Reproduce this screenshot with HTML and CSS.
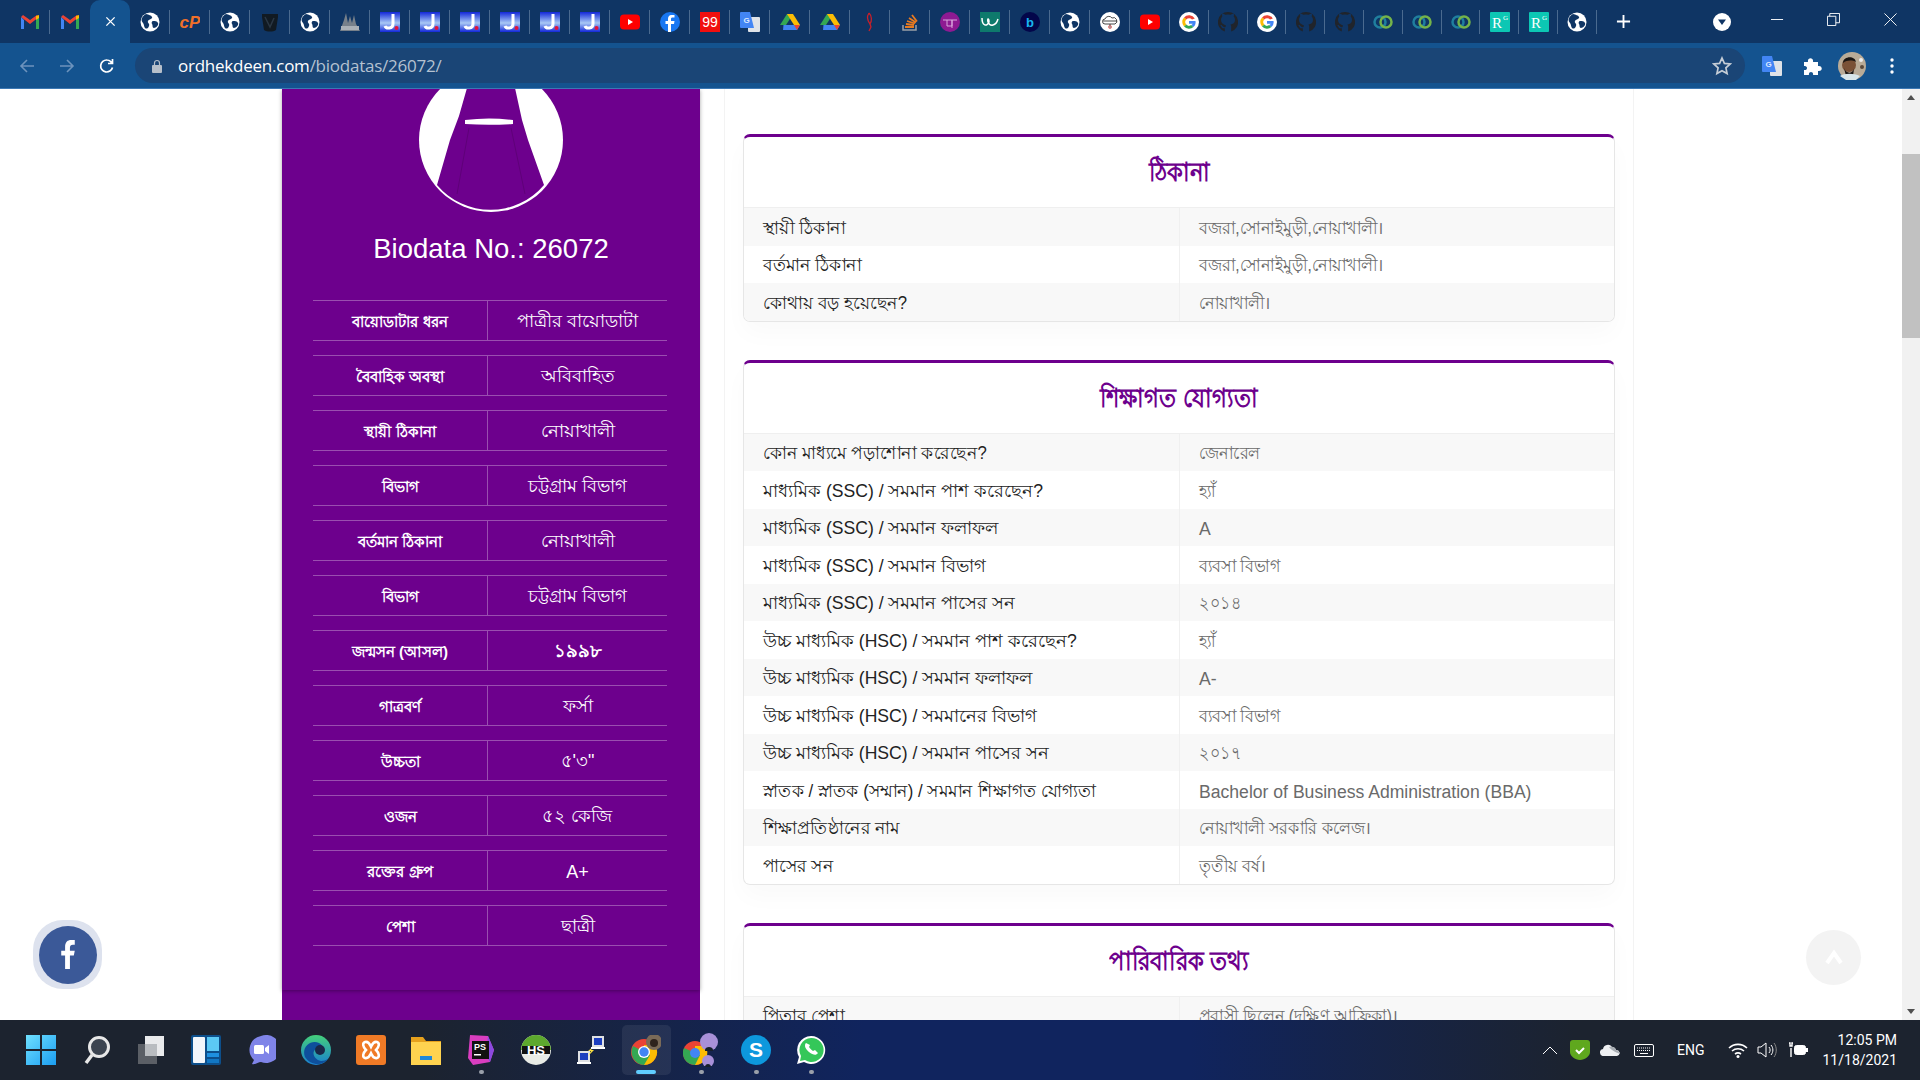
FILE: index.html
```html
<!DOCTYPE html>
<html lang="bn">
<head>
<meta charset="utf-8">
<title>Biodata No.: 26072</title>
<link rel="stylesheet" href="styles.css">
</head>
<body>
<svg class="sprite" width="0" height="0" aria-hidden="true">
  <symbol id="gmail" viewBox="0 0 20 20"><path d="M1 5v12h3V8z" fill="#4285f4"/><path d="M19 5v12h-3V8z" fill="#34a853"/><path d="M1 5l9 7 9-7-2-2-7 5-7-5z" fill="#ea4335"/><path d="M16 4l3-1v3l-3 2z" fill="#fbbc04"/></symbol>
  <symbol id="globe" viewBox="0 0 20 20"><circle cx="10" cy="10" r="9.5" fill="#fff"/><path d="M6 2c3 1 5 1 6 3s-3 2-4 4 2 2 1 5-3 3-4 2-1-4-2-5-2-3-1-5 2-3 4-4zM13 9c2 0 4 0 5 2s-2 5-4 5-1-3-2-4 0-3 1-3z" fill="#0f3564"/></symbol>
  <symbol id="wp" viewBox="0 0 20 20"><path d="M2 2h16v3l-2 13c-3 2-9 2-12 0L2 5z" fill="#111a22"/><path d="M5 5l5 10 4-9" stroke="#2a3744" stroke-width="1.500" fill="none"/></symbol>
  <symbol id="mast" viewBox="0 0 20 20"><path d="M0 19L4 8l2-7 2 10 2-7 2 7 2-8 2 9 4 7z" fill="#77808a"/><path d="M1 14h18v4H1z" fill="#aab0b6"/></symbol>
  <symbol id="jay" viewBox="0 0 20 20"><defs><linearGradient id="jg" x1="0" y1="0" x2="0" y2="1"><stop offset="0" stop-color="#1327d8"/><stop offset=".55" stop-color="#a8c8f5"/><stop offset="1" stop-color="#1327d8"/></linearGradient></defs><rect width="20" height="20" fill="url(#jg)"/><path d="M13 2v10c0 5-7 5-8 2" stroke="#fff" stroke-width="3" fill="none"/><circle cx="16.500" cy="16" r="2" fill="#e2123c"/></symbol>
  <symbol id="yt" viewBox="0 0 20 20"><rect y="2.500" width="20" height="15" rx="4" fill="#f00"/><path d="M8 7l5 3-5 3z" fill="#fff"/></symbol>
  <symbol id="fb" viewBox="0 0 20 20"><circle cx="10" cy="10" r="10" fill="#1877f2"/><path d="M11 20v-8h3l.5-3H11V7c0-1 .5-1.500 1.500-1.500h2V3h-3C9 3 8 5 8 7v2H5.500v3H8v8z" fill="#fff"/></symbol>
  <symbol id="drive" viewBox="0 0 20 20"><path d="M7 2h6l-7 11H0z" fill="#34a853"/><path d="M7 2h6l7 11h-6z" fill="#fbbc04"/><path d="M3.500 13H20l-3 5H3z" fill="#4285f4"/><path d="M14 13h6l-3 5z" fill="#ea4335"/></symbol>
  <symbol id="feather" viewBox="0 0 20 20"><path d="M9 1c3 3 3 8 1 11l1 3-2 4m0-18c-2 3-2 7 1 11" stroke="#c8202a" stroke-width="1.300" fill="none"/></symbol>
  <symbol id="stack" viewBox="0 0 20 20"><path d="M3 13v5h13v-5" stroke="#9aa0a6" stroke-width="1.500" fill="none"/><path d="M5 15h9M6 12l8 1M7 9l8 2.500M9 6l7 4.500M12 3l5 6.500" stroke="#e87a20" stroke-width="1.800"/></symbol>
  <symbol id="purp" viewBox="0 0 20 20"><circle cx="10" cy="10" r="10" fill="#8e1a92"/><path d="M3 8h14M7 8v6h5V8M12 8v8" stroke="#d9a6dc" stroke-width="1" fill="none"/></symbol>
  <symbol id="weebly" viewBox="0 0 20 20"><rect width="20" height="24" y="-2" fill="#0e7a6c"/><path d="M2 6c0 8 5 9 7 4 0-4-2-4-1 0 2 5 8 4 10-3" stroke="#fff" stroke-width="1.500" fill="none"/></symbol>
  <symbol id="cloudy" viewBox="0 0 20 20"><circle cx="10" cy="10" r="10" fill="#fff"/><path d="M5 12a2.500 2.500 0 010-5 4 4 0 017-1 3 3 0 013 6zM3 9h14M10 12v4" stroke="#333" stroke-width=".9" fill="none"/><circle cx="10" cy="15" r="1.500" fill="none" stroke="#d55" stroke-width=".8"/></symbol>
  <symbol id="gg" viewBox="0 0 20 20"><circle cx="10" cy="10" r="10" fill="#fff"/><path d="M15.800 6.500A6.700 6.700 0 005 5.500l2.300 2A3.700 3.700 0 0113 7.500z" fill="#ea4335"/><path d="M5 5.500a6.700 6.700 0 000 9l2.300-2a3.700 3.700 0 010-5z" fill="#fbbc04"/><path d="M5 14.500a6.700 6.700 0 009.500.500l-2.300-1.900a3.700 3.700 0 01-4.900-.6z" fill="#34a853"/><path d="M16.500 9H10v2.700h3.700a3 3 0 01-1.500 1.400l2.300 1.900A6.500 6.500 0 0016.500 9z" fill="#4285f4"/></symbol>
  <symbol id="gh" viewBox="0 0 20 20"><path d="M10 0a10 10 0 00-3.200 19.500v-3.300c-2.700.6-3.300-1.300-3.300-1.300-1-1.800-1.500-1.800-1.500-1.800h1.500l1.500 1.500c1 1 2 .6 2.500.4l.5-1.500C5 12.200 3 11 3 8a5 5 0 011.300-3.500c-.2-.5-.5-1.600 0-3 0 0 1 0 3 1.300a10 10 0 015.400 0c2-1.300 3-1.300 3-1.300.5 1.400.2 2.500 0 3A5 5 0 0117 8c0 3-2 4.200-4.500 4.500l.7 1.800v5.200A10 10 0 0010 0z" fill="#20242b"/></symbol>
  <symbol id="rings" viewBox="0 0 20 20"><circle cx="7" cy="10" r="5.500" fill="none" stroke="#1f7f9e" stroke-width="2.500"/><circle cx="13" cy="10" r="5.500" fill="none" stroke="#74b34a" stroke-width="2.500"/></symbol>
</svg>

<header class="chrome">
  <div class="tabstrip">
    <div class="tab"><svg class="ico"><use href="#gmail"/></svg></div>
    <div class="tab tab-before-active"><svg class="ico"><use href="#gmail"/></svg></div>
    <div class="tab tab-active"><svg class="ico-x" viewBox="0 0 12 12"><path d="M1.500 1.500l9 9M10.500 1.500l-9 9" stroke="#fff" stroke-width="1.500"/></svg></div>
    <div class="tab"><svg class="ico"><use href="#globe"/></svg></div>
    <div class="tab"><svg class="ico" viewBox="0 0 20 20"><text x="10" y="15.500" text-anchor="middle" font-family="Liberation Sans" font-weight="700" font-style="italic" font-size="17" fill="#f0702a">cP</text></svg></div>
    <div class="tab"><svg class="ico"><use href="#globe"/></svg></div>
    <div class="tab"><svg class="ico"><use href="#wp"/></svg></div>
    <div class="tab"><svg class="ico"><use href="#globe"/></svg></div>
    <div class="tab"><svg class="ico"><use href="#mast"/></svg></div>
    <div class="tab"><svg class="ico"><use href="#jay"/></svg></div>
    <div class="tab"><svg class="ico"><use href="#jay"/></svg></div>
    <div class="tab"><svg class="ico"><use href="#jay"/></svg></div>
    <div class="tab"><svg class="ico"><use href="#jay"/></svg></div>
    <div class="tab"><svg class="ico"><use href="#jay"/></svg></div>
    <div class="tab"><svg class="ico"><use href="#jay"/></svg></div>
    <div class="tab"><svg class="ico"><use href="#yt"/></svg></div>
    <div class="tab"><svg class="ico"><use href="#fb"/></svg></div>
    <div class="tab"><svg class="ico" viewBox="0 0 20 20"><rect width="20" height="20" fill="#f10f0f"/><text x="10" y="15" text-anchor="middle" font-family="Liberation Sans" font-size="14" fill="#fff">99</text></svg></div>
    <div class="tab"><svg class="ico" viewBox="0 0 20 20"><rect x="8" y="5" width="12" height="15" rx="1" fill="#dfe3e8"/><path d="M0 1a1 1 0 011-1h9l4 16H1a1 1 0 01-1-1z" fill="#4285f4"/><text x="6.500" y="11" text-anchor="middle" font-family="Liberation Sans" font-weight="700" font-size="8" fill="#dce9ff">G</text></svg></div>
    <div class="tab"><svg class="ico"><use href="#drive"/></svg></div>
    <div class="tab"><svg class="ico"><use href="#drive"/></svg></div>
    <div class="tab"><svg class="ico"><use href="#feather"/></svg></div>
    <div class="tab"><svg class="ico"><use href="#stack"/></svg></div>
    <div class="tab"><svg class="ico"><use href="#purp"/></svg></div>
    <div class="tab"><svg class="ico"><use href="#weebly"/></svg></div>
    <div class="tab"><svg class="ico" viewBox="0 0 20 20"><circle cx="10" cy="10" r="10" fill="#03064a"/><text x="10" y="15" text-anchor="middle" font-family="Liberation Sans" font-weight="700" font-size="13" fill="#18b4f0">b</text></svg></div>
    <div class="tab"><svg class="ico"><use href="#globe"/></svg></div>
    <div class="tab"><svg class="ico"><use href="#cloudy"/></svg></div>
    <div class="tab"><svg class="ico"><use href="#yt"/></svg></div>
    <div class="tab tab-n"><svg class="ico"><use href="#gg"/></svg></div>
    <div class="tab tab-n"><svg class="ico"><use href="#gh"/></svg></div>
    <div class="tab tab-n"><svg class="ico"><use href="#gg"/></svg></div>
    <div class="tab tab-n"><svg class="ico"><use href="#gh"/></svg></div>
    <div class="tab tab-n"><svg class="ico"><use href="#gh"/></svg></div>
    <div class="tab tab-n"><svg class="ico"><use href="#rings"/></svg></div>
    <div class="tab tab-n"><svg class="ico"><use href="#rings"/></svg></div>
    <div class="tab tab-n"><svg class="ico"><use href="#rings"/></svg></div>
    <div class="tab tab-n"><svg class="ico" viewBox="0 0 20 20"><rect width="20" height="20" rx="1" fill="#0cc7b4"/><text x="7" y="16" text-anchor="middle" font-family="Liberation Serif" font-size="15" fill="#fff">R</text><text x="15.500" y="8" text-anchor="middle" font-family="Liberation Serif" font-size="7" fill="#fff">G</text></svg></div>
    <div class="tab tab-n"><svg class="ico" viewBox="0 0 20 20"><rect width="20" height="20" rx="1" fill="#0cc7b4"/><text x="7" y="16" text-anchor="middle" font-family="Liberation Serif" font-size="15" fill="#fff">R</text><text x="15.500" y="8" text-anchor="middle" font-family="Liberation Serif" font-size="7" fill="#fff">G</text></svg></div>
    <div class="tab tab-n"><svg class="ico"><use href="#globe"/></svg></div>
    <div class="newtab"><svg class="ico-plus" viewBox="0 0 16 16"><path d="M8 1v14M1 8h14" stroke="#fff" stroke-width="2"/></svg></div>
    <div class="tabsearch"><svg class="ico-drop" viewBox="0 0 20 20"><circle cx="10" cy="10" r="9" fill="#fff"/><path d="M6 7.500h8L10 13z" fill="#0f3564"/></svg></div>
    <div class="winctl">
      <svg class="ico-win" viewBox="0 0 14 14"><path d="M0 7h13" stroke="#fff" stroke-width="1"/></svg>
      <svg class="ico-win" viewBox="0 0 14 14"><path d="M.5 3.500h9v10h-9zM3 3.500V.5h10.500v10H9.500" stroke="#fff" fill="none"/></svg>
      <svg class="ico-win" viewBox="0 0 14 14"><path d="M.5.5l13 13M13.500.5l-13 13" stroke="#fff"/></svg>
    </div>
  </div>
  <div class="toolbar">
    <div class="navbtn"><svg class="ico-nav" viewBox="0 0 16 16"><path d="M15 8H2M8 2L2 8l6 6" stroke="#6d93bd" stroke-width="1.600" fill="none"/></svg></div>
    <div class="navbtn"><svg class="ico-nav" viewBox="0 0 16 16"><path d="M1 8h13M8 2l6 6-6 6" stroke="#6d93bd" stroke-width="1.600" fill="none"/></svg></div>
    <div class="navbtn"><svg class="ico-nav" viewBox="0 0 16 16"><path d="M13.500 9.500A6 6 0 118 2c2 0 3.500 1 4.500 2.500M13.500 1v4.500H9" stroke="#fff" stroke-width="1.700" fill="none"/></svg></div>
    <div class="omnibox">
      <svg class="ico-lock" viewBox="0 0 10 14"><path d="M2.500 6V4a2.500 2.500 0 015 0v2" stroke="#b6bfca" fill="none" stroke-width="1.200"/><rect y="6" width="10" height="8" rx="1" fill="#b6bfca"/></svg>
      <span class="url"><span class="url-host">ordhekdeen.com</span><span class="url-path">/biodatas/26072/</span></span>
      <svg class="ico-star" viewBox="0 0 20 20"><path d="M10 2l2.400 5.400 5.800.6-4.300 3.900 1.200 5.700L10 14.700l-5.100 2.900 1.200-5.700L1.800 8l5.800-.6z" stroke="#c5cdd6" stroke-width="1.700" fill="none"/></svg>
    </div>
    <div class="extensions">
      <div class="navbtn"><svg class="ico" viewBox="0 0 20 20"><rect x="8" y="5" width="12" height="15" rx="1" fill="#dfe3e8"/><path d="M0 1a1 1 0 011-1h9l4 16H1a1 1 0 01-1-1z" fill="#4285f4"/><text x="6.500" y="11" text-anchor="middle" font-family="Liberation Sans" font-weight="700" font-size="8" fill="#dce9ff">G</text></svg></div>
      <div class="navbtn"><svg class="ico" viewBox="0 0 20 20"><path d="M2 6h4c-1-5 6-5 5 0h5v4c5-1 5 6 0 5v4h-5c1-4-5-4-4 0H2v-5c4 1 4-5 0-4z" fill="#fff"/></svg></div>
      <div class="navbtn"><svg class="ico-me" viewBox="0 0 28 28"><circle cx="14" cy="14" r="14" fill="#b9ab97"/><circle cx="11" cy="13" r="7" fill="#7a5136"/><path d="M5 11c0-7 12-8 13-1-4-2-9-2-13 1z" fill="#1b1613"/><path d="M6 16c2 6 8 6 10 1l-1 7H8z" fill="#1d1714"/><path d="M2 24c4-3 14-3 20 0l-4 4H8z" fill="#d8e6ea"/><circle cx="23" cy="8" r="2" fill="#eee"/><circle cx="24" cy="15" r="2" fill="#59493c"/></svg></div>
      <div class="navbtn"><svg class="ico-dots" viewBox="0 0 4 16"><circle cx="2" cy="2" r="1.700" fill="#fff"/><circle cx="2" cy="8" r="1.700" fill="#fff"/><circle cx="2" cy="14" r="1.700" fill="#fff"/></svg></div>
    </div>
  </div>
</header>

<div class="viewport">
  <main class="page">
    <aside class="sidebar">
      <div class="side-panel">
        <svg class="avatar" viewBox="0 0 144 144"><circle cx="72" cy="72" r="72" fill="#fff"/><path d="M18 117L31 72l9-24 8-28c4-12 10-20 24-20s20 8 24 20l7 32 6 20 16 45a70 70 0 01-107 0z" fill="#6d008d"/><path d="M46 52c16-2 32-2 48 0v4c-16 1-32 1-48 0z" fill="#fff"/><path d="M50 60l-12 66M92 60l14 66" stroke="#5f0079" fill="none"/></svg>
        <h2 class="bio-no">Biodata No.: 26072</h2>
        <div class="side-list">
          <div class="side-row"><div class="side-key">বায়োডাটার ধরন</div><div class="side-val">পাত্রীর বায়োডাটা</div></div>
          <div class="side-row"><div class="side-key">বৈবাহিক অবস্থা</div><div class="side-val">অবিবাহিত</div></div>
          <div class="side-row"><div class="side-key">স্থায়ী ঠিকানা</div><div class="side-val">নোয়াখালী</div></div>
          <div class="side-row"><div class="side-key">বিভাগ</div><div class="side-val">চট্টগ্রাম বিভাগ</div></div>
          <div class="side-row"><div class="side-key">বর্তমান ঠিকানা</div><div class="side-val">নোয়াখালী</div></div>
          <div class="side-row"><div class="side-key">বিভাগ</div><div class="side-val">চট্টগ্রাম বিভাগ</div></div>
          <div class="side-row"><div class="side-key">জন্মসন (আসল)</div><div class="side-val side-strong">১৯৯৮</div></div>
          <div class="side-row"><div class="side-key">গাত্রবর্ণ</div><div class="side-val">ফর্সা</div></div>
          <div class="side-row"><div class="side-key">উচ্চতা</div><div class="side-val">৫'৩"</div></div>
          <div class="side-row"><div class="side-key">ওজন</div><div class="side-val">৫২ কেজি</div></div>
          <div class="side-row"><div class="side-key">রক্তের গ্রুপ</div><div class="side-val">A+</div></div>
          <div class="side-row"><div class="side-key">পেশা</div><div class="side-val">ছাত্রী</div></div>
        </div>
      </div>
    </aside>
    <section class="content">
      <article class="card">
        <h3 class="card-title"><span class="title-text">ঠিকানা</span></h3>
        <div class="info-row"><div class="info-key"><span class="key-bn">স্থায়ী ঠিকানা</span></div><div class="info-val"><span class="val-bn">বজরা,সোনাইমুড়ী,নোয়াখালী।</span></div></div>
        <div class="info-row"><div class="info-key"><span class="key-bn">বর্তমান ঠিকানা</span></div><div class="info-val"><span class="val-bn">বজরা,সোনাইমুড়ী,নোয়াখালী।</span></div></div>
        <div class="info-row"><div class="info-key"><span class="key-bn">কোথায় বড় হয়েছেন?</span></div><div class="info-val"><span class="val-bn">নোয়াখালী।</span></div></div>
      </article>
      <article class="card">
        <h3 class="card-title"><span class="title-text">শিক্ষাগত যোগ্যতা</span></h3>
        <div class="info-row"><div class="info-key"><span class="key-bn">কোন মাধ্যমে পড়াশোনা করেছেন?</span></div><div class="info-val"><span class="val-bn">জেনারেল</span></div></div>
        <div class="info-row"><div class="info-key">মাধ্যমিক (SSC) / সমমান পাশ করেছেন?</div><div class="info-val"><span class="val-bn">হ্যাঁ</span></div></div>
        <div class="info-row"><div class="info-key">মাধ্যমিক (SSC) / সমমান ফলাফল</div><div class="info-val">A</div></div>
        <div class="info-row"><div class="info-key">মাধ্যমিক (SSC) / সমমান বিভাগ</div><div class="info-val"><span class="val-bn">ব্যবসা বিভাগ</span></div></div>
        <div class="info-row"><div class="info-key">মাধ্যমিক (SSC) / সমমান পাসের সন</div><div class="info-val"><span class="val-bn">২০১৪</span></div></div>
        <div class="info-row"><div class="info-key">উচ্চ মাধ্যমিক (HSC) / সমমান পাশ করেছেন?</div><div class="info-val"><span class="val-bn">হ্যাঁ</span></div></div>
        <div class="info-row"><div class="info-key">উচ্চ মাধ্যমিক (HSC) / সমমান ফলাফল</div><div class="info-val">A-</div></div>
        <div class="info-row"><div class="info-key">উচ্চ মাধ্যমিক (HSC) / সমমানের বিভাগ</div><div class="info-val"><span class="val-bn">ব্যবসা বিভাগ</span></div></div>
        <div class="info-row"><div class="info-key">উচ্চ মাধ্যমিক (HSC) / সমমান পাসের সন</div><div class="info-val"><span class="val-bn">২০১৭</span></div></div>
        <div class="info-row"><div class="info-key"><span class="key-bn">স্নাতক / স্নাতক (সম্মান) / সমমান শিক্ষাগত যোগ্যতা</span></div><div class="info-val">Bachelor of Business Administration (BBA)</div></div>
        <div class="info-row"><div class="info-key"><span class="key-bn">শিক্ষাপ্রতিষ্ঠানের নাম</span></div><div class="info-val"><span class="val-bn">নোয়াখালী সরকারি কলেজ।</span></div></div>
        <div class="info-row"><div class="info-key"><span class="key-bn">পাসের সন</span></div><div class="info-val"><span class="val-bn">তৃতীয় বর্ষ।</span></div></div>
      </article>
      <article class="card">
        <h3 class="card-title"><span class="title-text">পারিবারিক তথ্য</span></h3>
        <div class="info-row"><div class="info-key"><span class="key-bn">পিতার পেশা</span></div><div class="info-val"><span class="val-bn">প্রবাসী ছিলেন (দক্ষিণ আফ্রিকা)।</span></div></div>
      </article>
    </section>
    <a class="fb-float"><span class="fb-inner"><svg class="fb-f" viewBox="0 0 14 30"><path d="M4 30V16H0v-5h4V7c0-5 3-7 6-7h4v5h-2c-2 0-3 1-3 3v3h5l-1 5H9v14z" fill="#fff"/></svg></span></a>
    <a class="to-top"><svg class="to-top-ico" viewBox="0 0 20 20"><path d="M3 15l7-10 7 10" stroke="#fff" stroke-width="4" fill="none"/></svg></a>
  </main>
  <div class="scrollbar">
    <svg class="sb-arrow" viewBox="0 0 10 10"><path d="M1 7h8L5 2z" fill="#505050"/></svg>
    <div class="sb-track"><div class="sb-thumb"></div></div>
    <svg class="sb-arrow" viewBox="0 0 10 10"><path d="M1 3h8L5 8z" fill="#505050"/></svg>
  </div>
</div>

<footer class="taskbar">
  <div class="task-icons">
    <div class="task"><svg class="tk" viewBox="0 0 30 30"><defs><linearGradient id="wn" x1="0" y1="0" x2="1" y2="1"><stop offset="0" stop-color="#6fe0ff"/><stop offset="1" stop-color="#1b9df0"/></linearGradient></defs><path d="M0 0h14v14H0zM16 0h14v14H16zM0 16h14v14H0zM16 16h14v14H16z" fill="url(#wn)"/></svg></div>
    <div class="task"><svg class="tk" viewBox="0 0 30 30"><circle cx="18" cy="12" r="9.500" fill="#3c4450" stroke="#e8e8e8" stroke-width="3"/><path d="M11 20l-6 8" stroke="#e8e8e8" stroke-width="3.500"/></svg></div>
    <div class="task"><svg class="tk" viewBox="0 0 30 30"><rect x="2" y="9" width="19" height="20" fill="#5b5f66"/><rect x="9" y="1" width="19" height="20" fill="#e9eaec"/><rect x="9" y="9" width="12" height="12" fill="#b9bcc0"/></svg></div>
    <div class="task"><svg class="tk" viewBox="0 0 30 30"><rect width="30" height="30" rx="2" fill="#0d4f8b"/><rect x="2" y="2" width="12" height="26" rx="1" fill="#f3f6fa"/><rect x="16" y="2" width="12" height="14" fill="#5cc9f5"/><rect x="16" y="18" width="12" height="4" fill="#1e90e0"/><rect x="16" y="24" width="12" height="4" fill="#1277c4"/></svg></div>
    <div class="task"><svg class="tk" viewBox="0 0 30 30"><path d="M15 1a14 14 0 110 26c-3 0-6 3-9 2l2-4A14 14 0 0115 1z" fill="#7f84e8"/><rect x="8" y="10" width="10" height="9" rx="1.500" fill="#fff"/><path d="M19 13l4-3v9l-4-3z" fill="#fff"/></svg></div>
    <div class="task"><svg class="tk" viewBox="0 0 30 30"><defs><linearGradient id="ed" x1="0" y1="0" x2="0" y2="1"><stop offset="0" stop-color="#44d07b"/><stop offset="1" stop-color="#1a7fd0"/></linearGradient></defs><circle cx="15" cy="15" r="15" fill="url(#ed)"/><path d="M4 22c-4-10 6-18 14-14 4 2 6 7 3 9-3 1-6 0-6-3-5 3-2 11 5 12 3 0 5-1 7-2-6 8-18 6-23-2z" fill="#0e4f9c"/><circle cx="19" cy="15" r="5" fill="#1a2748"/></svg></div>
    <div class="task"><svg class="tk" viewBox="0 0 30 30"><rect width="30" height="30" rx="3" fill="#f07a26"/><path d="M9 7c4-1 5 3 6 5 1-2 2-6 6-5 3 1 2 5-1 8 3 3 4 7 1 8-4 1-5-3-6-5-1 2-2 6-6 5-3-1-2-5 1-8-3-3-4-7-1-8z" fill="none" stroke="#fff" stroke-width="2.500"/></svg></div>
    <div class="task"><svg class="tk" viewBox="0 0 30 30"><path d="M0 2h12l3 4h15v24H0z" fill="#e6a11d"/><path d="M0 7h30v23H0z" fill="#ffd34f"/><rect x="9" y="21" width="12" height="4" fill="#1f88d8"/></svg></div>
    <div class="task task-dot"><svg class="tk" viewBox="0 0 30 30"><path d="M4 0l18 1 6 14-4 12-17 3-5-7z" fill="#d93ec0"/><path d="M22 1l6 14-4 12-4-6z" fill="#8a4ae0"/><rect x="6" y="6" width="17" height="18" fill="#111"/><text x="14" y="15" text-anchor="middle" font-family="Liberation Sans" font-weight="700" font-size="9" fill="#fff">PS</text><rect x="8" y="19" width="7" height="1.500" fill="#fff"/></svg></div>
    <div class="task"><svg class="tk" viewBox="0 0 30 30"><circle cx="15" cy="15" r="15" fill="#e8ebe6"/><path d="M0 15a15 15 0 0130 0z" fill="#5da82e"/><rect x="1" y="11" width="28" height="8" fill="#111"/><text x="15" y="19.500" text-anchor="middle" font-family="Liberation Sans" font-weight="700" font-size="13" fill="#fff">HS</text></svg></div>
    <div class="task"><svg class="tk" viewBox="0 0 30 30"><rect x="16" y="1" width="12" height="11" fill="#dfe1e4"/><rect x="18" y="3" width="8" height="7" fill="#1d3fbf"/><rect x="2" y="16" width="12" height="11" fill="#dfe1e4"/><rect x="4" y="18" width="8" height="7" fill="#1d3fbf"/><path d="M18 11l-6 5 3 0-3 5 6-6-3 0z" fill="#ffe23f"/><rect x="1" y="27" width="14" height="2" fill="#fff"/><rect x="15" y="12" width="14" height="2" fill="#fff"/></svg></div>
    <div class="task task-active"><svg class="tk" viewBox="0 0 30 30"><circle cx="13" cy="17" r="13" fill="#ea4335"/><path d="M13 30a13 13 0 0011-20H13z" fill="#fbbc04"/><path d="M2 11a13 13 0 0011 19l6-10z" fill="#34a853"/><circle cx="13" cy="17" r="6" fill="#fff"/><circle cx="13" cy="17" r="4.700" fill="#4285f4"/><circle cx="23" cy="7" r="8" fill="#7a6a58"/><circle cx="23" cy="8" r="4" fill="#2e221c"/></svg></div>
    <div class="task task-dot"><svg class="tk tk-wide" viewBox="0 0 36 34"><circle cx="12" cy="20" r="12" fill="#ea4335"/><path d="M12 32a12 12 0 0010-19H12z" fill="#fbbc04"/><path d="M1 15a12 12 0 0011 17l5-10z" fill="#34a853"/><circle cx="12" cy="20" r="5" fill="#4285f4"/><circle cx="26" cy="9" r="9" fill="#a890d8"/><path d="M22 17c0-4 8-4 8 0v1h-8z" fill="#16202b"/><circle cx="25" cy="28" r="6" fill="#a890d8"/><path d="M22 34c0-4 6-4 6 0z" fill="#16202b"/></svg></div>
    <div class="task task-dot"><svg class="tk" viewBox="0 0 30 30"><circle cx="15" cy="15" r="15" fill="#0d98dd"/><text x="15" y="22" text-anchor="middle" font-family="Liberation Sans" font-weight="700" font-size="21" fill="#fff">S</text></svg></div>
    <div class="task task-dot"><svg class="tk" viewBox="0 0 30 30"><path d="M15 1a14 14 0 11-7 26L1 29l2-7A14 14 0 0115 1z" fill="#fff"/><path d="M15 3a12 12 0 11-6 22l-5 1 1-5A12 12 0 0115 3z" fill="#34c759"/><path d="M10 8c-2 2-1 6 3 9s7 4 9 1l-3-3-2 1c-2-1-3-3-4-4l1-2z" fill="#fff"/></svg></div>
  </div>
  <div class="tray">
    <svg class="tr tr-chev" viewBox="0 0 16 10"><path d="M1 9l7-7 7 7" stroke="#fff" fill="none"/></svg>
    <svg class="tr tr-shield" viewBox="0 0 20 20"><path d="M3 0h14c2 0 3 1 3 3v9c0 4-5 8-10 8S0 16 0 12V3c0-2 1-3 3-3z" fill="#5fa81e"/><path d="M6 10l3 3 5-5" stroke="#fff" stroke-width="2" fill="none"/></svg>
    <svg class="tr tr-cloud" viewBox="0 0 20 12"><path d="M4 12a3.500 3.500 0 01-1-7 5 5 0 019-2 4 4 0 014 3 3 3 0 011 6z" fill="#eef0f2"/><path d="M9 3a5 5 0 017 3c2 .5 4 2 4 4-2-1-8-3-11-7z" fill="#a8adb3"/></svg>
    <svg class="tr tr-kbd" viewBox="0 0 20 13"><rect x=".5" y=".5" width="19" height="12" rx="1.500" stroke="#fff" fill="none"/><path d="M3 4h14M3 6.500h14" stroke="#fff" stroke-dasharray="1 1"/><path d="M6 9.500h8" stroke="#fff"/></svg>
    <span class="tray-lang">ENG</span>
    <svg class="tr tr-wifi" viewBox="0 0 20 16"><path d="M1 6a13 13 0 0118 0M4 9a9 9 0 0112 0M7 12a5 5 0 016 0" stroke="#fff" stroke-width="1.600" fill="none"/><circle cx="10" cy="14.500" r="1.500" fill="#fff"/></svg>
    <svg class="tr tr-vol" viewBox="0 0 20 16"><path d="M1 5h3l5-4v14l-5-4H1z" stroke="#fff" fill="none"/><path d="M12 5c1.500 2 1.500 4 0 6M14 3c2.500 3 2.500 7 0 10" stroke="#fff" fill="none"/><path d="M17 1c3 4 3 10 0 14" stroke="#888" fill="none"/></svg>
    <svg class="tr tr-batt" viewBox="0 0 20 16"><path d="M1 1h1v3h2V1h1M3 6v9" stroke="#fff" fill="none" stroke-width="1.400"/><rect x="6.500" y="3.500" width="11" height="9" rx="2" stroke="#fff" fill="#fff"/><rect x="18" y="6" width="2" height="4" fill="#fff"/></svg>
    <div class="clock"><span>12:05 PM</span><span>11/18/2021</span></div>
  </div>
</footer>
</body>
</html>
```
FILE: styles.css
```css
* { box-sizing: border-box; }
html, body { margin: 0; height: 100%; }
body {
  display: flex;
  flex-direction: column;
  height: 1080px;
  overflow: hidden;
  background: #fff;
  font-family: "Liberation Sans", "Noto Sans", sans-serif;
}
.sprite { position: absolute; }

/* browser chrome */
.chrome { flex: 0 0 89px; background: #14538f; border-bottom: 1px solid #3c78b4; }
.tabstrip { height: 43px; background: #0f3564; display: flex; align-items: stretch; padding-left: 10px; }
.tab { flex: 0 0 40px; height: 43px; display: flex; align-items: center; justify-content: center; position: relative; }
.tab-n { flex-basis: 38.8px; }
.tab::after { content: ""; position: absolute; right: 0; top: 10px; height: 24px; width: 1px; background: #4a6a8f; }
.tab-before-active::after, .tab-active::after { display: none; }
.tab-active { background: #14538f; border-radius: 10px 10px 0 0; }
.ico { width: 20px; height: 20px; }
.ico-x { width: 11px; height: 11px; }
.newtab { flex: 0 0 40px; margin-left: 7px; display: flex; align-items: center; justify-content: center; }
.ico-plus { width: 15px; height: 15px; }
.tabsearch { flex: 0 0 40px; margin-left: 58px; display: flex; align-items: center; justify-content: center; }
.ico-drop { width: 20px; height: 20px; }
.winctl { flex: 0 0 170px; margin-left: 8px; display: grid; grid-template-columns: 56px 56px 58px; align-items: center; justify-items: center; padding-bottom: 4px; }
.ico-win { width: 13px; height: 13px; }
.toolbar { height: 45px; display: flex; align-items: center; padding-left: 7px; }
.navbtn { flex: 0 0 40px; height: 35px; display: flex; align-items: center; justify-content: center; }
.ico-nav { width: 16px; height: 16px; }
.omnibox { flex: 0 0 1610px; margin-left: 8px; height: 35px; border-radius: 18px; background: #1a4576; display: flex; align-items: center; padding-left: 17px; padding-right: 13px; }
.ico-lock { width: 10px; height: 14px; }
.url { margin-left: 16px; font-family: "Open Sans", sans-serif; font-size: 17px; letter-spacing: -.24px; flex: 1; white-space: nowrap; }
.url-host { color: #fff; }
.url-path { color: #b5c2d1; }
.ico-star { width: 20px; height: 20px; }
.extensions { display: flex; margin-left: 7px; }
.ico-me { width: 28px; height: 28px; }
.ico-dots { width: 4px; height: 16px; }

/* page */
.viewport { flex: 0 0 931px; display: flex; overflow: hidden; }
.page { flex: 1; padding-left: 282px; display: flex; align-items: flex-start; height: 931px; overflow: hidden; position: relative; }
.sidebar { flex: 0 0 418px; height: 931px; background: #6d008d; color: #fff; }
.side-panel { height: 901px; display: flex; flex-direction: column; align-items: center; box-shadow: 0 1px 4px rgba(0, 0, 0, .35); }
.avatar { width: 144px; height: 144px; margin-top: -21px; flex: none; }
.bio-no { margin: 19px 0 0; height: 36px; line-height: 36px; font-size: 27.500px; font-weight: 400; }
.side-list { margin-top: 33px; margin-right: 2px; width: 354px; display: flex; flex-direction: column; gap: 14px; }
.side-row { height: 41px; display: grid; grid-template-columns: 175px 179px; border-top: 1px solid #9a4eb0; border-bottom: 1px solid #9a4eb0; }
.side-key, .side-val { display: flex; align-items: center; justify-content: center; white-space: nowrap; padding-top: 3px; }
.side-key { font-size: 15px; font-weight: 700; border-right: 1px solid #9a4eb0; }
.side-val { font-size: 18px; }
.side-strong { font-weight: 700; }
.content { flex: 0 0 910px; margin-left: 24px; padding: 45px 18px 0; border-left: 1px solid #f3f3f3; border-right: 1px solid #f3f3f3; height: 931px; overflow: hidden; }
.card { border: 1px solid #e6e6e6; border-top: 3px solid #6d008d; border-radius: 7px; margin-bottom: 38px; box-shadow: 0 12px 24px rgba(0, 0, 0, .025); overflow: hidden; }
.card-title { margin: 0; height: 71px; padding-top: 4px; border-bottom: 1px solid #efefef; display: flex; align-items: center; justify-content: center; color: #6d008d; font-size: 26px; font-weight: 700; }
.title-text { display: inline-block; transform: scaleX(.87); }
.info-row { height: 37.500px; display: grid; grid-template-columns: 1fr 1fr; font-size: 17.600px; }
.info-row:nth-child(even) { background: #f8f8f8; }
.info-key, .info-val { display: flex; align-items: center; padding-left: 19px; padding-top: 5px; white-space: nowrap; }
.info-key { color: #222; }
.info-val { color: #6a6a6a; border-left: 1px solid #f0f0f0; }
.key-bn { display: inline-block; transform: scaleX(.95); transform-origin: left center; }
.val-bn { display: inline-block; transform: scaleX(.883); transform-origin: left center; }
.fb-float { position: absolute; left: 33px; top: 831px; width: 69px; height: 69px; border-radius: 30px; background: #dde2ee; display: flex; align-items: center; justify-content: center; }
.fb-inner { width: 58px; height: 58px; border-radius: 50%; background: #3b5998; display: flex; align-items: center; justify-content: center; }
.fb-f { width: 14px; height: 29px; }
.to-top { position: absolute; left: 1806px; top: 841px; width: 55px; height: 55px; border-radius: 50%; background: #f3f3f3; display: flex; align-items: center; justify-content: center; }
.to-top-ico { width: 20px; height: 20px; }
.scrollbar { flex: 0 0 18px; background: #f1f1f1; display: flex; flex-direction: column; }
.sb-arrow { flex: 0 0 18px; width: 18px; height: 18px; padding: 4px; }
.sb-track { flex: 1; padding-top: 47px; }
.sb-thumb { height: 184px; background: #c1c1c1; }

/* taskbar */
.taskbar { flex: 0 0 60px; display: flex; align-items: center; justify-content: space-between; background: linear-gradient(90deg, #1c232f 0, #1c232f 22%, #10245e 45%, #10245e 62%, #1c232f 82%, #1c232f 100%); color: #fff; font-family: "Roboto", "Noto Sans", sans-serif; }
.task-icons { display: flex; padding-left: 13.500px; }
.task { flex: 0 0 55px; height: 50px; display: flex; align-items: center; justify-content: center; position: relative; }
.tk { width: 30px; height: 30px; }
.tk-wide { width: 36px; height: 34px; }
.task-dot::after { content: ""; position: absolute; left: 25px; bottom: 1px; width: 5px; height: 4px; border-radius: 2px; background: #9aa0aa; }
.task-active { background: rgba(255, 255, 255, .07); border-radius: 5px; flex-basis: 49px; margin: 0 3px; }
.task-active::after { content: ""; position: absolute; left: 14.500px; bottom: 1px; width: 20px; height: 4px; border-radius: 2px; background: #60cdff; }
.tray { display: flex; align-items: center; padding-right: 23px; }
.tr { flex: none; }
.tr-chev { width: 16px; height: 10px; }
.tr-shield { width: 20px; height: 20px; margin-left: 12px; }
.tr-cloud { width: 20px; height: 12px; margin-left: 10px; }
.tr-kbd { width: 20px; height: 13px; margin-left: 14px; }
.tray-lang { font-size: 14px; margin-left: 23px; width: 30px; }
.tr-wifi { width: 20px; height: 16px; margin-left: 21px; }
.tr-vol { width: 20px; height: 16px; margin-left: 9px; }
.tr-batt { width: 20px; height: 16px; margin-left: 11px; }
.clock { margin-left: 20px; display: flex; flex-direction: column; align-items: flex-end; font-size: 14px; line-height: 20px; width: 69px; white-space: nowrap; }
```
